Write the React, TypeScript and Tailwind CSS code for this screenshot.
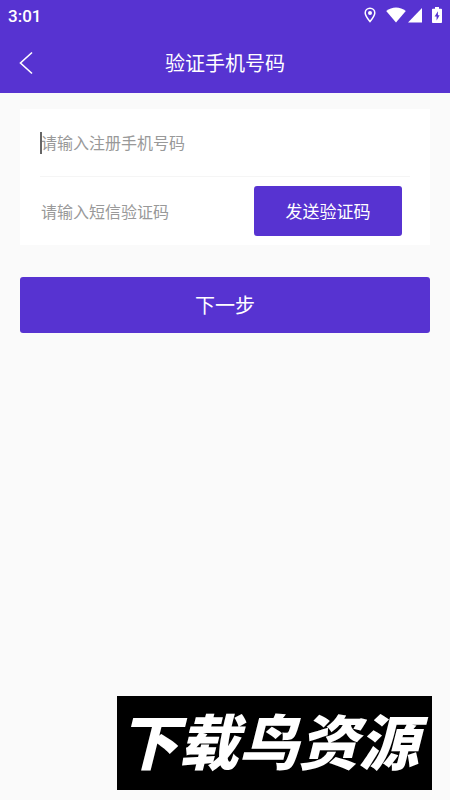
const cjk = 'font-["Noto_Sans_CJK_SC",sans-serif]';

function StatusBar() {
  return (
    <div className="flex h-8 items-center justify-between pr-2 pl-2 text-white">
      <span className="font-[Roboto,sans-serif] text-[17px] leading-5 font-medium">3:01</span>
      <div className="flex items-center pb-0.5">
        <svg className="mr-2.5 h-4 w-3" viewBox="0 0 12 16" fill="none" stroke="currentColor" aria-hidden="true">
          <path d="M6 14.6C3.6 11.6 1.2 8.8 1.2 6a4.800 4.800 0 0 1 9.600 0c0 2.800-2.400 5.600-4.800 8.600z" strokeWidth="1.500" />
          <circle cx="6" cy="6" r="2" fill="currentColor" stroke="none" />
        </svg>
        <svg className="mr-0.5 h-4 w-5" viewBox="0 0 20 16" fill="currentColor" aria-hidden="true">
          <path d="M.2 4C5.800-.8 14.200-.8 19.800 4L10 15.600z" />
        </svg>
        <svg className="mr-2.5 h-4 w-3.5" viewBox="0 0 14 16" fill="currentColor" aria-hidden="true">
          <path d="M14 1V15.500H0z" />
        </svg>
        <svg className="h-4 w-2.5" viewBox="0 0 10 16" aria-hidden="true">
          <path d="M3 0h4v1.800h2.200c.5 0 .8.3.8.8v12.600c0 .5-.3.8-.8.8H.8c-.5 0-.8-.3-.8-.8V2.600c0-.5.3-.8.8-.8H3z" fill="currentColor" />
          <path d="M5.900 4.200 2.600 9.500h2v4l3-5.300H5.900z" fill="#5733d1" />
        </svg>
      </div>
    </div>
  );
}

export default function App() {
  return (
    <div className={`min-h-screen bg-[#fafafa] ${cjk}`}>
      <header className="bg-[#5733d1]">
        <StatusBar />
        <div className="grid h-[61px] grid-cols-[48px_1fr_48px] items-center text-white">
          <button type="button" aria-label="返回" className="flex h-full items-center pl-[19px]">
            <svg className="h-6 w-3.5" viewBox="0 0 14 24" fill="none" stroke="currentColor" strokeWidth="1.600" aria-hidden="true">
              <path d="M13 1.500 1.500 12 13 22.500" />
            </svg>
          </button>
          <h1 className="text-center text-xl">验证手机号码</h1>
        </div>
      </header>

      <form className="px-5 pt-4">
        <div className="bg-white px-5">
          <div className="relative flex h-[68px] items-center border-b border-[#f5f5f5]">
            <span className="absolute left-0 h-[22px] w-0.5 bg-[#666666]" />
            <input
              type="tel"
              aria-label="注册手机号码"
              placeholder="请输入注册手机号码"
              className="h-full w-full pb-0.5 pl-px text-base outline-none placeholder:text-[#999999]"
            />
          </div>
          <div className="flex h-[68px] items-center gap-2 pr-2">
            <input
              type="text"
              aria-label="短信验证码"
              placeholder="请输入短信验证码"
              className="h-full w-0 flex-1 pl-px text-base outline-none placeholder:text-[#999999]"
            />
            <button type="button" className="h-[50px] w-[148px] rounded-[3px] bg-[#5733d1] text-[17px] text-white">
              发送验证码
            </button>
          </div>
        </div>
        <button type="submit" className="mt-8 h-14 w-full rounded-[3px] bg-[#5733d1] text-xl text-white">
          下一步
        </button>
      </form>

      <div className="fixed right-[18px] bottom-2.5 flex h-[94px] w-[315px] items-center justify-center bg-black pr-3 pb-2">
        <span className="text-[60px] leading-none font-black whitespace-nowrap text-white italic">下载鸟资源</span>
      </div>
    </div>
  );
}
